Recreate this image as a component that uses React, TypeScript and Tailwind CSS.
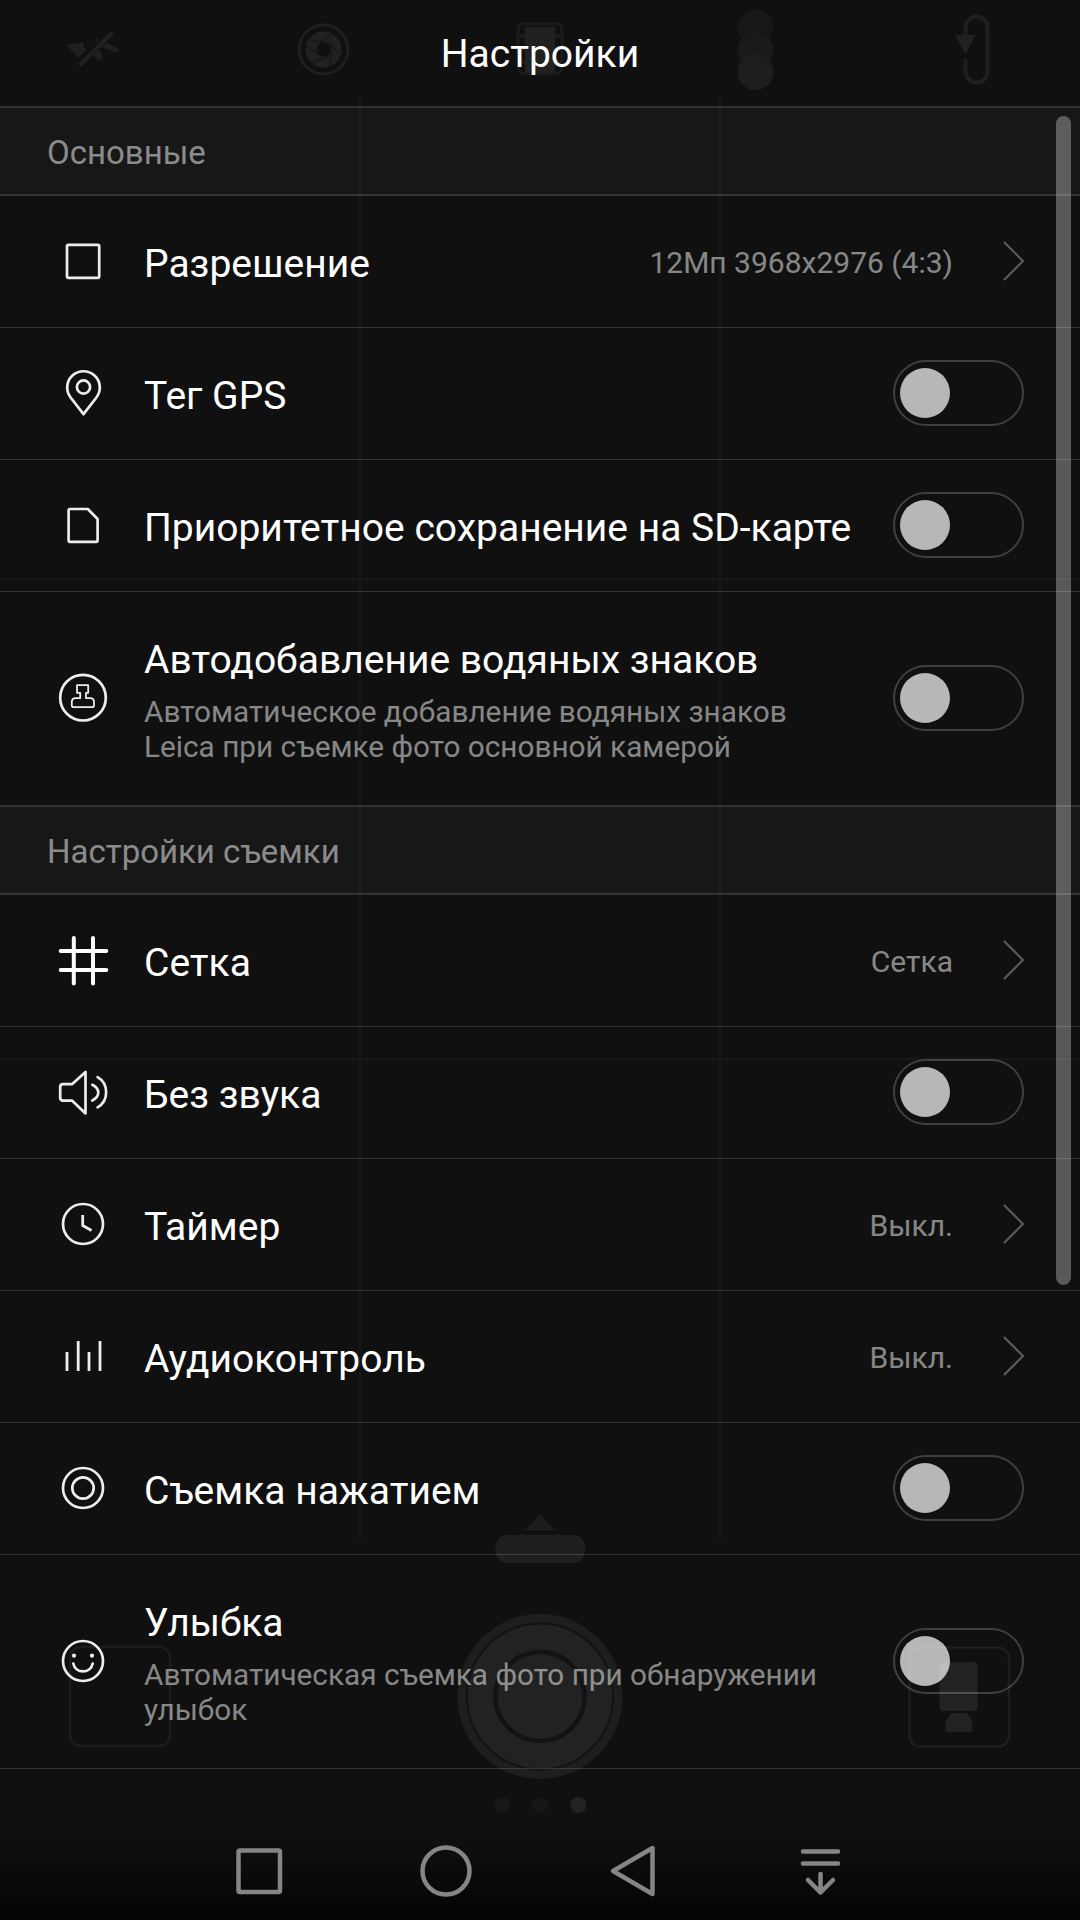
import type { ReactNode } from 'react';

type Item = {
  title: string;
  icon: ReactNode;
  note?: string[];
  value?: string;
};

const general: Item[] = [
  {
    title: 'Разрешение',
    value: '12Мп 3968x2976 (4:3)',
    icon: <rect x="14" y="13.8" width="32.2" height="33" rx="1.5" />,
  },
  {
    title: 'Тег GPS',
    icon: (
      <>
        <path d="M30.5 51.2 17.6 34.5a16.3 16.3 0 1 1 25.8 0z" />
        <circle cx="30.5" cy="24" r="6.6" />
      </>
    ),
  },
  {
    title: 'Приоритетное сохранение на SD-карте',
    icon: <path d="M17 14h17.8l9.8 10v21.3q0 1.5-1.5 1.5H17q-1.4 0-1.4-1.5V15.5Q15.6 14 17 14z" />,
  },
  {
    title: 'Автодобавление водяных знаков',
    note: ['Автоматическое добавление водяных знаков', 'Leica при съемке фото основной камерой'],
    icon: (
      <>
        <circle cx="30" cy="29.7" r="22.8" />
        <path
          strokeWidth="1.8"
          d="M24 17.2h11.2v7.6H33v5.4h4.2q3.8 0 3.8 3.8v3.2q0 2-2 2H20.8q-2 0-2-2V34q0-3.8 3.8-3.8h4.6v-5.4H24z"
        />
      </>
    ),
  },
];

const shooting: Item[] = [
  {
    title: 'Сетка',
    value: 'Сетка',
    icon: <path stroke="#fff" strokeWidth="4" strokeLinecap="round" d="M20.8 8v45.5M40 8v45.5M7.7 21h45.6M7.7 40h45.6" />,
  },
  {
    title: 'Без звука',
    icon: (
      <>
        <path d="M32.5 10v41.5L19 38.6h-9q-2.8 0-2.8-2.8V25q0-2.8 2.8-2.8h9z" />
        <path strokeLinecap="round" d="M39.3 22.8c8 4 8 11.5 0 15.7M44.6 15.2c11.4 6.6 11.4 23.5 0 30.2" />
      </>
    ),
  },
  {
    title: 'Таймер',
    value: 'Выкл.',
    icon: (
      <>
        <circle cx="30" cy="30" r="20" />
        <path strokeWidth="2.8" d="M29.7 21v10.5l8.8 5" />
      </>
    ),
  },
  {
    title: 'Аудиоконтроль',
    value: 'Выкл.',
    icon: <path strokeWidth="2.8" d="M14 26v19M25.2 15v30M36 26v19M47 15v30" />,
  },
  {
    title: 'Съемка нажатием',
    icon: (
      <>
        <circle cx="30" cy="30" r="20" />
        <circle cx="30" cy="30" r="10.7" />
      </>
    ),
  },
  {
    title: 'Улыбка',
    note: ['Автоматическая съемка фото при обнаружении', 'улыбок'],
    icon: (
      <>
        <circle cx="30" cy="30" r="20" />
        <circle cx="21" cy="24.7" r="2.1" fill="#ededed" stroke="none" />
        <circle cx="39" cy="24.7" r="2.1" fill="#ededed" stroke="none" />
        <path strokeLinecap="round" d="M20.3 32.5c2 10.6 17.4 10.6 19.4 0" />
      </>
    ),
  },
];

// Dimmed camera screen that shows through the settings list
function Viewfinder() {
  return (
    <svg className="absolute inset-0 pointer-events-none" width="1080" height="1920" viewBox="0 0 1080 1920" fill="none">
      <path d="M360 98v1442M720 98v1442" stroke="#171717" strokeWidth="2" />
      <path d="M0 579h1080M0 1059h1080" stroke="#171717" strokeWidth="2" />

      {/* flash off */}
      <path d="m67 45 17-3-1 5 4 3-9 8z" fill="#202020" />
      <path d="m94 55 6-6 3 9-5 3zM101 47l6-4 12 6-1 3-3 0zM95 40l3-2v4z" fill="#202020" />
      <path d="m79.5 65.5 33-33" stroke="#202020" strokeWidth="4" />

      {/* aperture */}
      <circle cx="323.5" cy="49.5" r="24.5" stroke="#1f1f1f" strokeWidth="2.8" />
      <circle cx="323.5" cy="49.5" r="12.5" stroke="#212121" strokeWidth="11" />
      <path
        d="m320 42-9-2M320 42l14-9M330 44l-10-2M330 44l9 9M331 52l-1-8M331 52l-1 14M326 57l5-5M326 57l-15 6M317 54l9 3M317 54l-11-8M320 42l-3 12"
        stroke="#151515"
        strokeWidth="1.3"
      />

      {/* film */}
      <rect x="518" y="24" width="44" height="50" rx="6" stroke="#1b1b1b" strokeWidth="3" />
      <path d="M525 27h30v46h-30z" fill="#212121" />
      <path d="M518 36h7M518 49h7M518 62h7M555 36h7M555 49h7M555 62h7" stroke="#1b1b1b" strokeWidth="4" />

      {/* filters */}
      <circle cx="755.5" cy="27.5" r="18" fill="#171717" />
      <circle cx="755.5" cy="50" r="18" fill="#1a1a1a" />
      <circle cx="755.5" cy="72" r="18" fill="#1e1e1e" />

      {/* switch camera */}
      <path d="M965.5 36v-8.5a11 11 0 0 1 22 0v44a11 11 0 0 1-22 0V59" stroke="#1f1f1f" strokeWidth="4" />
      <path d="M955 35h21l-10.5 19z" fill="#212121" />

      {/* mode drawer handle */}
      <path d="m540 1514 14.5 16.5h-29z" fill="#1d1d1d" />
      <rect x="495.5" y="1535" width="89.5" height="28" rx="12" fill="#1f1f1f" />

      {/* shutter */}
      <circle cx="540" cy="1696.5" r="82.5" fill="#1e1e1e" />
      <circle cx="540" cy="1696.5" r="73" fill="#222" stroke="#121212" strokeWidth="1.8" />
      <circle cx="540" cy="1696.5" r="44.5" stroke="#131313" strokeWidth="4.5" />

      {/* gallery and video buttons */}
      <rect x="70" y="1647" width="100" height="99" rx="11" stroke="#1c1c1c" strokeWidth="2.5" />
      <rect x="909.5" y="1647.5" width="99.5" height="99" rx="11" stroke="#1e1e1e" strokeWidth="2.5" />
      <rect x="939.5" y="1662" width="38" height="49" rx="4" fill="#222" />
      <path d="M953 1713h12q3 0 4 3 3.5 5 3.5 9v5q0 2-2 2h-23q-2 0-2-2v-5q0-4 3.5-9 1-3 4-3z" fill="#222" />

      <circle cx="502.5" cy="1805" r="8" fill="#171717" />
      <circle cx="540" cy="1805" r="8" fill="#161616" />
      <circle cx="578.5" cy="1805" r="8" fill="#222" />
    </svg>
  );
}

function Toggle() {
  return (
    <div className="mb-px flex h-[66px] w-[131px] shrink-0 items-center rounded-full border-2 border-white/20 pl-[5px]">
      <div className="size-[50px] rounded-full bg-white/70" />
    </div>
  );
}

function Chevron() {
  return (
    <svg className="-mr-px mb-px ml-[50px] shrink-0" width="22" height="40" viewBox="0 0 22 40" fill="none">
      <path d="m1 1 19 19L1 39" stroke="#5c5c5c" strokeWidth="2" />
    </svg>
  );
}

function Row({ item }: { item: Item }) {
  return (
    <li className={`flex items-center pr-14 pl-[53px] ${item.note ? 'h-[213px]' : 'h-[132px]'}`}>
      <svg
        className="mr-[31px] shrink-0"
        width="60"
        height="61"
        viewBox="0 0 60 61"
        fill="none"
        stroke="#ededed"
        strokeWidth="2.7"
        strokeLinejoin="round"
      >
        {item.icon}
      </svg>
      <div className="flex-1 pt-1">
        <p className="text-[39px] leading-[46px] whitespace-nowrap text-white">{item.title}</p>
        {item.note && (
          <div className="mt-[11px] text-[29.75px] leading-[35px] whitespace-nowrap text-white/50">
            {item.note.map((line) => (
              <p key={line}>{line}</p>
            ))}
          </div>
        )}
      </div>
      {item.value ? (
        <>
          <span className="pt-0.5 text-[30px] leading-9 whitespace-nowrap text-white/50">{item.value}</span>
          <Chevron />
        </>
      ) : (
        <Toggle />
      )}
    </li>
  );
}

function Section({ title, items }: { title: string; items: Item[] }) {
  return (
    <section className="border-white/15 last:border-b">
      <h2 className="flex h-[90px] items-center border-y-2 border-white/15 bg-white/3 bg-clip-padding pt-1 pl-[47px] text-[33px] leading-[38px] text-white/50">
        {title}
      </h2>
      <ul className="divide-y divide-white/15">
        {items.map((item) => (
          <Row key={item.title} item={item} />
        ))}
      </ul>
    </section>
  );
}

function NavBar() {
  return (
    <nav className="flex h-[98px] items-center justify-center bg-linear-to-b from-transparent from-10% to-black/75 pr-0.5">
      <svg className="mx-[65.5px]" width="56" height="56" fill="none" stroke="#858585" strokeWidth="4.5">
        <rect x="7.5" y="7.5" width="41.5" height="41.5" rx="1.5" />
      </svg>
      <svg className="mx-[65.5px]" width="56" height="56" fill="none" stroke="#858585" strokeWidth="4.5">
        <circle cx="28" cy="28" r="23.5" />
      </svg>
      <svg className="mx-[65.5px]" width="56" height="56" fill="none" stroke="#858585" strokeWidth="4.5" strokeLinejoin="round">
        <path d="M8 28 47.5 5v46z" />
      </svg>
      <svg
        className="mx-[65.5px]"
        width="56"
        height="56"
        fill="none"
        stroke="#858585"
        strokeWidth="4.5"
        strokeLinecap="round"
        strokeLinejoin="round"
      >
        <path d="M11 8.5h35M11 20.5h35M28.5 31v18.5M16 37l12.5 12.5L41 37" />
      </svg>
    </nav>
  );
}

export default function App() {
  return (
    <div className="relative h-[1920px] w-[1080px] overflow-hidden bg-[#101010] font-['Roboto','Noto_Sans',sans-serif]">
      <Viewfinder />
      <div className="relative flex h-full flex-col">
        <header className="flex h-[106px] items-center justify-center pt-0.5">
          <h1 className="text-[39px] leading-[46px] text-white">Настройки</h1>
        </header>
        <main className="flex-1">
          <Section title="Основные" items={general} />
          <Section title="Настройки съемки" items={shooting} />
        </main>
        <NavBar />
      </div>
      {/* scroll thumb */}
      <div className="absolute top-[116px] right-[9px] h-[1169px] w-[15px] rounded-full bg-white/30" />
    </div>
  );
}
